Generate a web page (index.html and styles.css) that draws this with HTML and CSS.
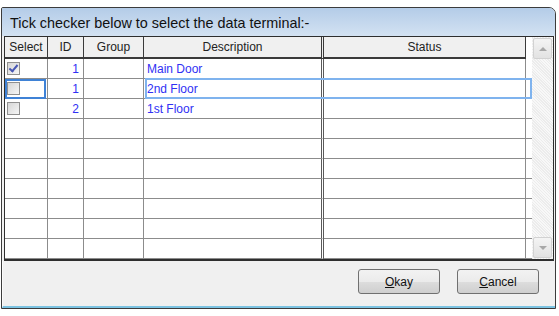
FILE: index.html
```html
<!DOCTYPE html>
<html lang="en">
<head>
  <meta charset="UTF-8" />
  <title>Select Terminal</title>
  <link rel="stylesheet" href="styles.css">
</head>
<body>
<div class="window">
  <div class="caption">Tick checker below to select the data terminal:-</div>

  <div class="grid">
    <table class="terminals">
      <colgroup>
        <col class="c-select">
        <col class="c-id">
        <col class="c-group">
        <col class="c-desc">
        <col class="c-status">
        <col class="c-fill">
      </colgroup>
      <thead>
        <tr>
          <th>Select</th>
          <th>ID</th>
          <th>Group</th>
          <th class="desc">Description</th>
          <th>Status</th>
          <th class="fill"></th>
        </tr>
      </thead>
      <tbody>
        <tr>
          <td><span class="check checked"></span></td>
          <td class="num">1</td>
          <td></td>
          <td class="desc">Main Door</td>
          <td></td>
          <td class="fill"></td>
        </tr>
        <tr>
          <td><span class="check"></span></td>
          <td class="num">1</td>
          <td></td>
          <td class="desc">2nd Floor</td>
          <td></td>
          <td class="fill"></td>
        </tr>
        <tr>
          <td><span class="check"></span></td>
          <td class="num">2</td>
          <td></td>
          <td class="desc">1st Floor</td>
          <td></td>
          <td class="fill"></td>
        </tr>
        <tr><td></td><td></td><td></td><td class="desc"></td><td></td><td class="fill"></td></tr>
        <tr><td></td><td></td><td></td><td class="desc"></td><td></td><td class="fill"></td></tr>
        <tr><td></td><td></td><td></td><td class="desc"></td><td></td><td class="fill"></td></tr>
        <tr><td></td><td></td><td></td><td class="desc"></td><td></td><td class="fill"></td></tr>
        <tr><td></td><td></td><td></td><td class="desc"></td><td></td><td class="fill"></td></tr>
        <tr><td></td><td></td><td></td><td class="desc"></td><td></td><td class="fill"></td></tr>
        <tr><td></td><td></td><td></td><td class="desc"></td><td></td><td class="fill"></td></tr>
      </tbody>
    </table>

    <!-- focus rectangles drawn over the second row -->
    <div class="row-focus"></div>
    <div class="cell-focus"></div>

    <div class="scrollbar">
      <div class="sb-btn"><span class="arrow up"></span></div>
      <div class="sb-track"></div>
      <div class="sb-btn"><span class="arrow down"></span></div>
    </div>
  </div>

  <div class="buttons">
    <button type="button" class="btn"><u>O</u>kay</button>
    <button type="button" class="btn"><u>C</u>ancel</button>
  </div>
</div>
</body>
</html>
```

FILE: styles.css
```css
body,
html {
  margin: 0;
  padding: 0;
  background-color: #ffffff;
  font-family: "Liberation Sans", Arial, sans-serif;
  font-size: 11px;
}

.window {
  margin: 7px 0 0 1px;
  width: 553px;
  height: 300px;
  border: 1px solid #3c3c3c;
  border-radius: 2px 7px 0 0;
  background-color: #f0f0f0;
  display: flex;
  flex-direction: column;
  overflow: hidden;
}

.caption {
  height: 28px;
  line-height: 30px;
  padding-left: 8px;
  font-size: 14.4px;
  color: #111;
  background: linear-gradient(#b4cce8, #d3e2f2);
}

.grid {
  position: relative;
  display: flex;
  margin: 0 1px 0 2px;
  height: 222px;
  border: 1px solid #2e2e2e;
  border-bottom-width: 2px;
  background-color: #ffffff;
}

.terminals {
  table-layout: fixed;
  border-collapse: separate;
  border-spacing: 0;
  width: 527px;
}

.c-select { width: 43px; }
.c-id { width: 36px; }
.c-group { width: 60px; }
.c-desc { width: 180px; }
.c-status { width: 202px; }
.c-fill { width: 6px; }

.terminals th,
.terminals td {
  padding: 0;
  border-right: 1px solid #8c8c8c;
  border-bottom: 1px solid #8c8c8c;
  overflow: hidden;
  white-space: nowrap;
}

.terminals th {
  height: 20px;
  background-color: #f0f0f0;
  border-right-color: #3a3a3a;
  border-bottom: 2px solid #3a3a3a;
  font-weight: normal;
  color: #222;
  text-align: center;
  font-size: 12px;
}

.terminals td {
  height: 19px;
  color: #3030f4;
  font-size: 12px;
}

.terminals .desc {
  border-right: 3px double #5a5a5a;
  padding-left: 3px;
}

.terminals th.desc {
  padding-left: 0;
  border-right: 3px double #3a3a3a;
}

.terminals .fill {
  border-right: none;
  background-color: #ffffff;
}

.terminals th.fill {
  border-bottom-color: #ffffff;
}

.terminals .num {
  text-align: right;
  padding-right: 4px;
}

.check {
  display: block;
  position: relative;
  margin-left: 2px;
  width: 11px;
  height: 11px;
  border: 1px solid #909090;
  background: linear-gradient(135deg, #d6d6d6, #f6f6f6);
}

.check.checked::after {
  content: "";
  position: absolute;
  left: 3px;
  top: 0;
  width: 3px;
  height: 7px;
  border: solid #4756b4;
  border-width: 0 2px 2px 0;
  transform: rotate(40deg);
}

.row-focus {
  position: absolute;
  left: 140px;
  top: 41px;
  width: 387px;
  height: 21px;
  box-sizing: border-box;
  border: 2px solid #7fb3ee;
}

.cell-focus {
  position: absolute;
  left: 0;
  top: 42px;
  width: 41px;
  height: 20px;
  box-sizing: border-box;
  border: 2px solid #3f82d6;
}

.scrollbar {
  display: flex;
  flex-direction: column;
  width: 21px;
  margin-left: auto;
  background-color: #f3f3f3;
  background-image: repeating-linear-gradient(45deg, #ececec 0 1px, #f8f8f8 1px 2px);
}

.sb-btn {
  height: 19px;
  margin: 1px;
  border: 1px solid #d2d2d2;
  border-radius: 2px;
  background: linear-gradient(#f4f4f4, #e2e2e2);
  display: flex;
  align-items: center;
  justify-content: center;
}

.sb-track {
  flex: 1;
}

.arrow {
  width: 0;
  height: 0;
  border-left: 4px solid transparent;
  border-right: 4px solid transparent;
}

.arrow.up {
  border-bottom: 4px solid #a8a8a8;
}

.arrow.down {
  border-top: 4px solid #a8a8a8;
}

.buttons {
  flex: 1;
  display: flex;
  justify-content: flex-end;
  align-items: flex-start;
  gap: 17px;
  padding: 8px 16px 0 0;
  border-left: 1px solid #fbfbfb;
  border-bottom: 2px solid #7cc3e2;
}

.btn {
  width: 82px;
  height: 25px;
  padding: 0;
  font-family: "Liberation Sans", Arial, sans-serif;
  font-size: 12px;
  color: #111;
  border: 1px solid #707070;
  border-radius: 3px;
  background: linear-gradient(#f2f2f2 0%, #ebebeb 50%, #dddddd 51%, #cfcfcf 100%);
  cursor: pointer;
}
```
